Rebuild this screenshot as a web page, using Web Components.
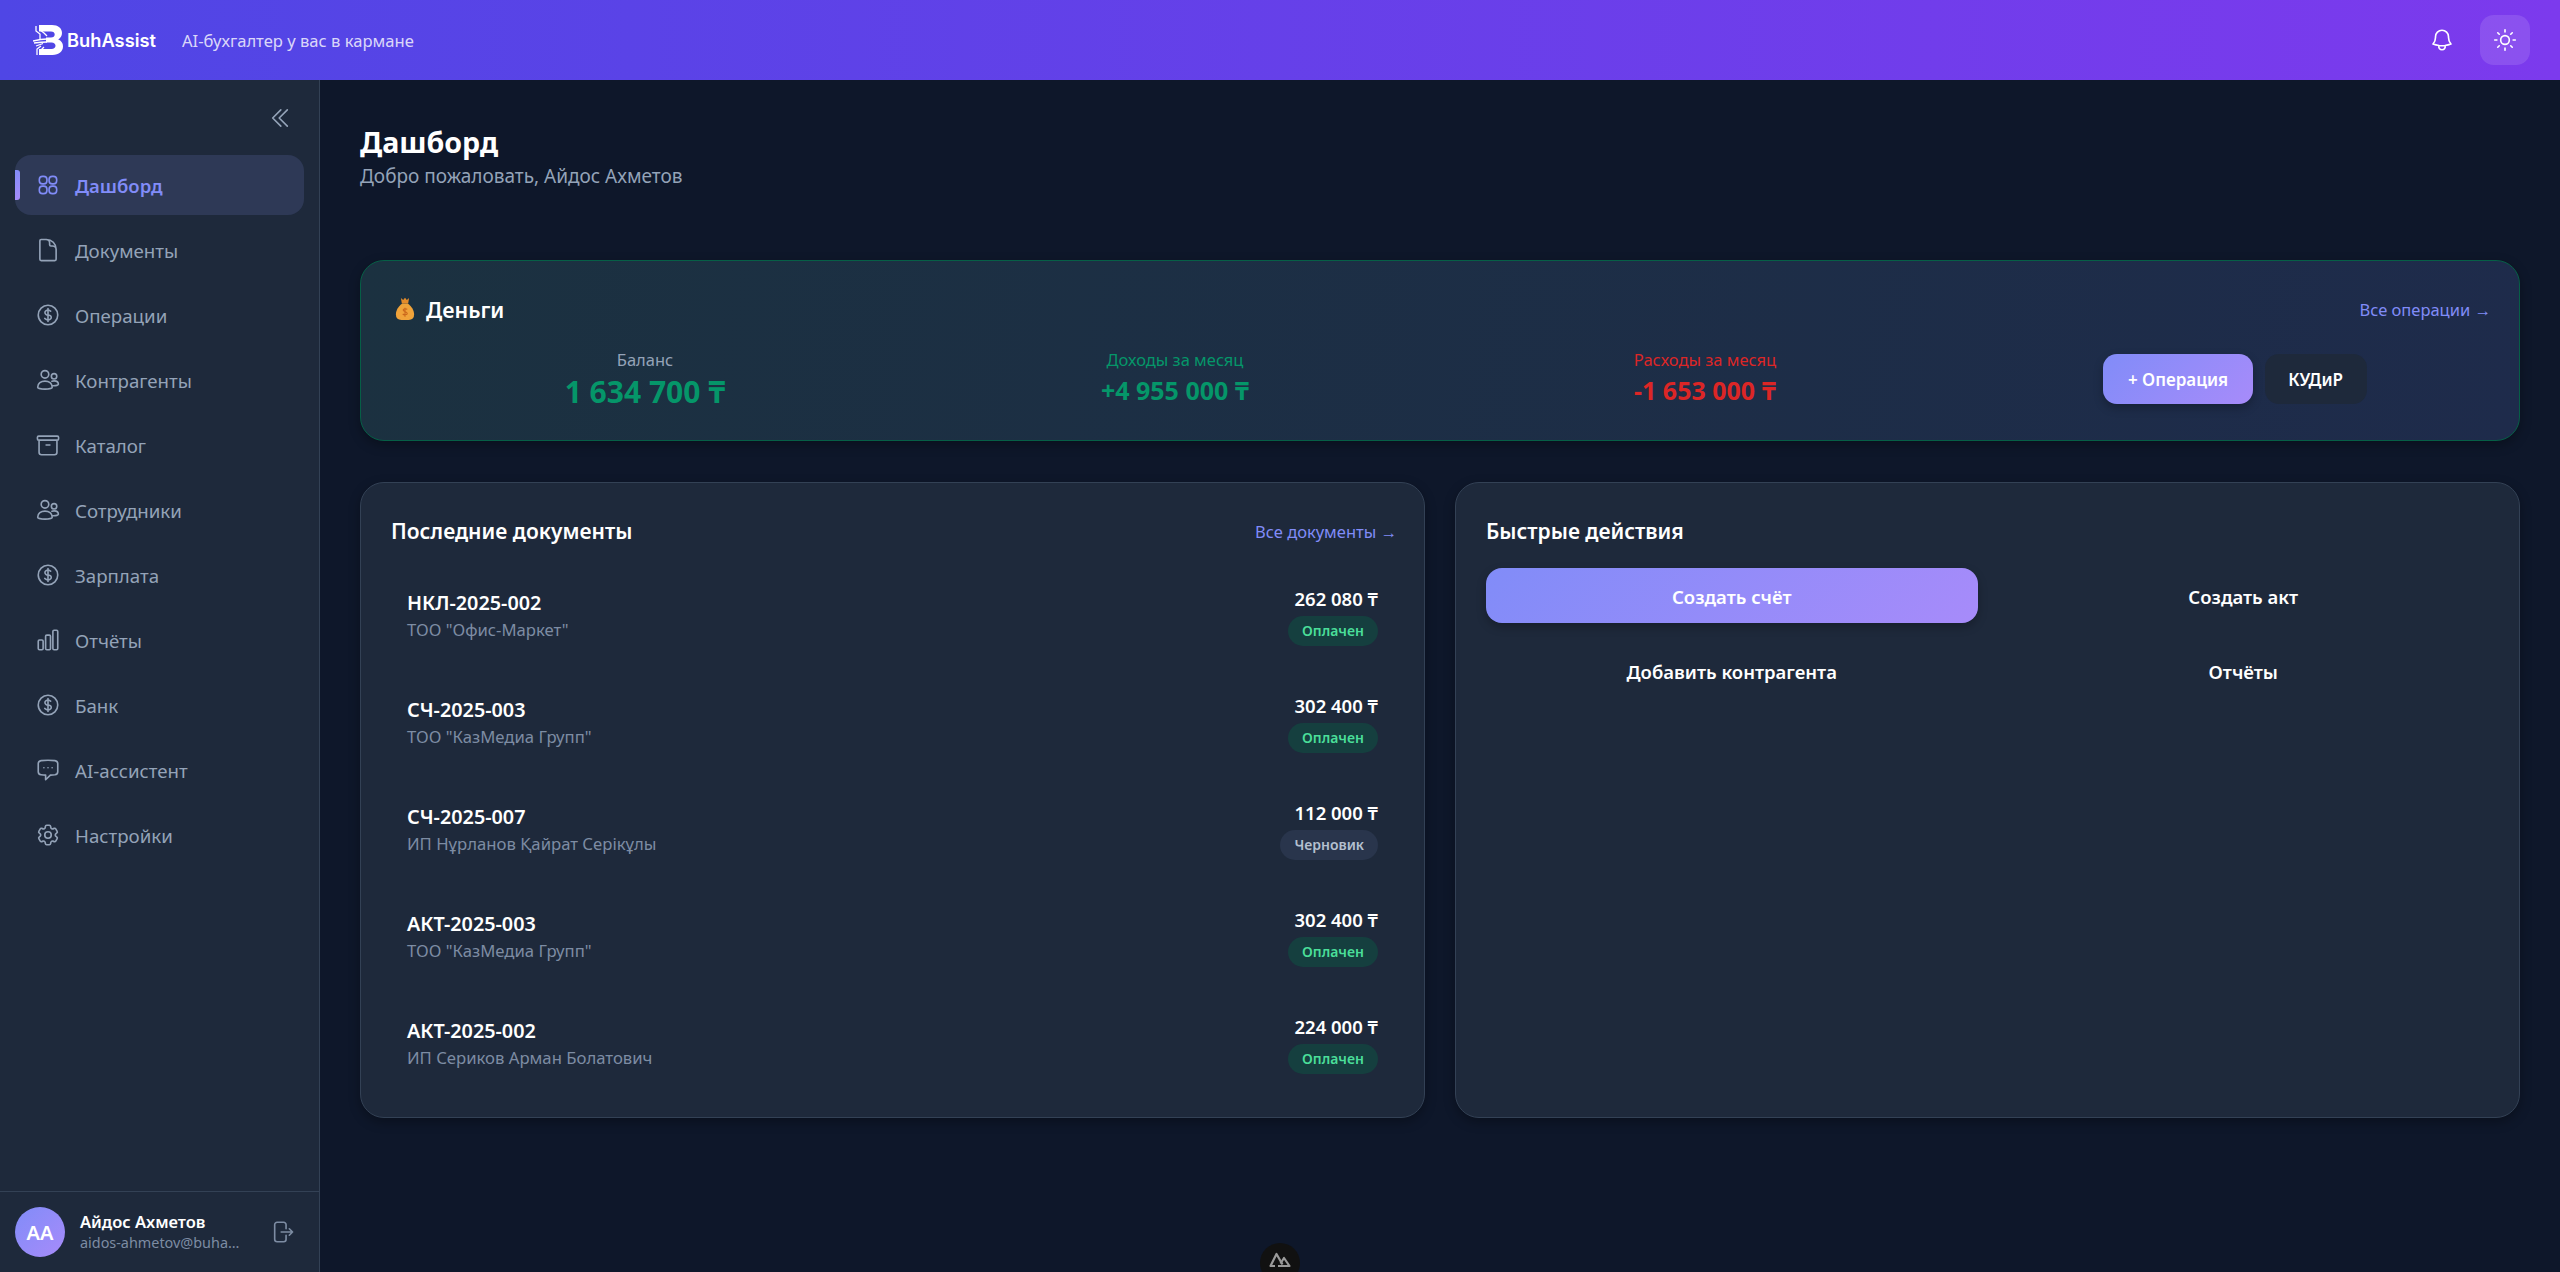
<!DOCTYPE html>
<html lang="ru">
<head>
<meta charset="utf-8">
<title>BuhAssist</title>
<style>
  html, body { margin: 0; height: 100%; background: #0e172a; overflow: hidden; }
  body { font-family: "Noto Sans", "Open Sans", sans-serif; color: #fff; }
</style>
</head>
<body>
<app-shell>
  <app-header slot="top"></app-header>
  <side-bar slot="side">
    <nav-item icon="grid" active>Дашборд</nav-item>
    <nav-item icon="doc">Документы</nav-item>
    <nav-item icon="dollar">Операции</nav-item>
    <nav-item icon="users">Контрагенты</nav-item>
    <nav-item icon="box">Каталог</nav-item>
    <nav-item icon="users">Сотрудники</nav-item>
    <nav-item icon="dollar">Зарплата</nav-item>
    <nav-item icon="chart">Отчёты</nav-item>
    <nav-item icon="dollar">Банк</nav-item>
    <nav-item icon="chat">AI-ассистент</nav-item>
    <nav-item icon="gear">Настройки</nav-item>
    <user-box slot="bottom" name="Айдос Ахметов" mail="aidos-ahmetov@buha…"></user-box>
  </side-bar>
  <page-head title="Дашборд" sub="Добро пожаловать, Айдос Ахметов"></page-head>
  <money-card>
    <stat-block label="Баланс" value="1 634 700 ₸" kind="balance"></stat-block>
    <stat-block label="Доходы за месяц" value="+4 955 000 ₸" kind="in"></stat-block>
    <stat-block label="Расходы за месяц" value="-1 653 000 ₸" kind="out"></stat-block>
  </money-card>
  <two-cols>
    <panel-card title="Последние документы" link="Все документы →">
      <doc-row name="НКЛ-2025-002" who='ТОО "Офис-Маркет"' sum="262 080 ₸" status="Оплачен"></doc-row>
      <doc-row name="СЧ-2025-003" who='ТОО "КазМедиа Групп"' sum="302 400 ₸" status="Оплачен"></doc-row>
      <doc-row name="СЧ-2025-007" who="ИП Нұрланов Қайрат Серікұлы" sum="112 000 ₸" status="Черновик" draft></doc-row>
      <doc-row name="АКТ-2025-003" who='ТОО "КазМедиа Групп"' sum="302 400 ₸" status="Оплачен"></doc-row>
      <doc-row name="АКТ-2025-002" who="ИП Сериков Арман Болатович" sum="224 000 ₸" status="Оплачен"></doc-row>
    </panel-card>
    <panel-card title="Быстрые действия">
      <quick-grid>
        <quick-btn primary>Создать счёт</quick-btn>
        <quick-btn>Создать акт</quick-btn>
        <quick-btn>Добавить контрагента</quick-btn>
        <quick-btn>Отчёты</quick-btn>
      </quick-grid>
    </panel-card>
  </two-cols>
  <nuxt-badge slot="over"></nuxt-badge>
</app-shell>

<script>
// outline icons, 24x24 grid
const ICONS = {
  grid: '<rect x="4" y="4" width="7" height="7" rx="3"/><rect x="13" y="4" width="7" height="7" rx="3"/><rect x="4" y="13" width="7" height="7" rx="3"/><rect x="13" y="13" width="7" height="7" rx="3"/>',
  doc: '<path d="M19.5 14.25v-2.625a3.375 3.375 0 0 0-3.375-3.375h-1.5A1.125 1.125 0 0 1 13.5 7.125v-1.5a3.375 3.375 0 0 0-3.375-3.375H8.25m2.25 0H5.625c-.621 0-1.125.504-1.125 1.125v17.25c0 .621.504 1.125 1.125 1.125h12.75c.621 0 1.125-.504 1.125-1.125V11.25a9 9 0 0 0-9-9Z"/>',
  dollar: '<path d="M12 6v12m-3-2.818.879.659c1.171.879 3.07.879 4.242 0 1.172-.879 1.172-2.303 0-3.182C13.536 12.219 12.768 12 12 12c-.725 0-1.45-.22-2.003-.659-1.106-.879-1.106-2.303 0-3.182s2.9-.879 4.006 0l.415.33M21 12a9 9 0 1 1-18 0 9 9 0 0 1 18 0Z"/>',
  users: '<circle cx="9.2" cy="6.8" r="3.5"/><circle cx="17.6" cy="8.6" r="2.5"/><path d="M2.5 18.6c0-3.4 3-5.6 6.7-5.6 3.7 0 6.7 2.2 6.7 5.6 0 .9-3 1.8-6.7 1.8s-6.7-.9-6.7-1.8Z"/><path d="M15.6 13.2c.7-.3 1.4-.4 2.1-.4 2.2 0 3.9 1.3 3.9 3.2 0 .8-1.9 1.4-5.4 1.3"/>',
  box: '<path d="M20.25 7.5v11.25a2.25 2.25 0 0 1-2.25 2.25H6a2.25 2.25 0 0 1-2.25-2.25V7.5m6.5 4.5h3.5M3.4 7.5h17.2c.62 0 1.15-.5 1.15-1.125v-1.5C21.75 4.254 21.22 3.75 20.6 3.75H3.4c-.62 0-1.15.504-1.15 1.125v1.5C2.25 7 2.78 7.5 3.4 7.5Z"/>',
  chart: '<path d="M3 13.1c0-.62.5-1.1 1.1-1.1h2.3c.6 0 1.1.5 1.1 1.1v6.8c0 .6-.5 1.1-1.1 1.1H4.100c-.6 0-1.1-.5-1.1-1.1v-6.800ZM9.800 8.600c0-.6.5-1.100 1.100-1.100h2.300c.6 0 1.100.5 1.100 1.100v11.300c0 .6-.5 1.100-1.100 1.100h-2.300c-.6 0-1.100-.5-1.100-1.100V8.600ZM16.500 4.100c0-.6.5-1.100 1.100-1.100h2.300c.6 0 1.100.5 1.100 1.100v15.800c0 .6-.5 1.100-1.100 1.100h-2.300c-.6 0-1.100-.5-1.100-1.100V4.100Z"/>',
  chat: '<path d="M3 6.200c0-1.500 1.100-2.700 2.600-2.900 2-.2 4.100-.3 6.400-.3s4.400.1 6.400.3c1.500.2 2.600 1.400 2.600 2.900v7.300c0 1.500-1.100 2.700-2.600 2.900-1.400.1-2.800.2-4.200.3L9.800 21v-4.300c-1.500 0-2.900-.1-4.200-.3C4.100 16.200 3 15 3 13.500V6.200Z"/><path d="M8.200 9.900h.01M12 9.900h.01M15.800 9.900h.01"/>',
  gear: '<path d="M9.594 3.940c.09-.542.56-.940 1.110-.940h2.593c.55 0 1.020.398 1.110.940l.213 1.281c.063.374.313.686.645.870.074.040.147.083.220.127.325.196.720.257 1.075.124l1.217-.456a1.125 1.125 0 0 1 1.370.490l1.296 2.247a1.125 1.125 0 0 1-.260 1.431l-1.003.827c-.293.241-.438.613-.430.992a7.723 7.723 0 0 1 0 .255c-.008.378.137.750.430.991l1.004.827c.424.350.534.955.260 1.430l-1.298 2.247a1.125 1.125 0 0 1-1.369.491l-1.217-.456c-.355-.133-.750-.072-1.076.124a6.470 6.470 0 0 1-.220.128c-.331.183-.581.495-.644.869l-.213 1.281c-.090.543-.560.940-1.110.940h-2.594c-.550 0-1.019-.398-1.110-.940l-.213-1.281c-.062-.374-.312-.686-.644-.870a6.520 6.520 0 0 1-.220-.127c-.325-.196-.720-.257-1.076-.124l-1.217.456a1.125 1.125 0 0 1-1.369-.490l-1.297-2.247a1.125 1.125 0 0 1 .260-1.431l1.004-.827c.292-.240.437-.613.430-.991a6.932 6.932 0 0 1 0-.255c.007-.380-.138-.751-.430-.992l-1.004-.827a1.125 1.125 0 0 1-.260-1.430l1.297-2.247a1.125 1.125 0 0 1 1.370-.491l1.216.456c.356.133.751.072 1.076-.124.072-.044.146-.086.220-.128.332-.183.582-.495.644-.869l.214-1.280Z"/><circle cx="12" cy="12" r="3"/>',
  chevrons: '<path d="m18.750 4.500-7.500 7.500 7.500 7.500m-6-15L5.250 12l7.500 7.500"/>',
  logout: '<path d="M15.750 9V5.250A2.250 2.250 0 0 0 13.500 3h-6a2.250 2.250 0 0 0-2.250 2.250v13.500A2.250 2.250 0 0 0 7.500 21h6a2.250 2.250 0 0 0 2.250-2.250V15m-4.500-3h10.500m0 0-3-3m3 3-3 3"/>',
  bell: '<path d="M14.857 17.082a23.848 23.848 0 0 0 5.454-1.310A8.967 8.967 0 0 1 18 9.750V9A6 6 0 0 0 6 9v.750a8.967 8.967 0 0 1-2.312 6.022c1.733.640 3.560 1.085 5.455 1.310m5.714 0a24.255 24.255 0 0 1-5.714 0m5.714 0a3 3 0 1 1-5.714 0"/>',
  sun: '<path d="M12 2.500v2M12 19.500v2M2.500 12h2M19.500 12h2M5.300 5.300l1.400 1.400M17.300 17.300l1.400 1.400M5.300 18.700l1.400-1.400M17.300 6.700l1.400-1.400"/><circle cx="12" cy="12" r="4"/>'
};

function icon(name, size, sw) {
  return `<svg width="${size}" height="${size}" viewBox="0 0 24 24" fill="none" stroke="currentColor" stroke-width="${sw || 1.5}" stroke-linecap="round" stroke-linejoin="round">${ICONS[name]}</svg>`;
}

class AppShell extends HTMLElement {
  constructor() {
    super();
    this.attachShadow({ mode: 'open' });
    this.shadowRoot.innerHTML = `
      <style>
        :host { display: flex; flex-direction: column; height: 100vh; position: relative; overflow: hidden; }
        .body { flex: 1; display: flex; min-height: 0; }
        main { flex: 1; min-width: 0; padding: 40px 40px 0; background: #0e172a; box-sizing: border-box; }
      </style>
      <slot name="top"></slot>
      <div class="body">
        <slot name="side"></slot>
        <main><slot></slot></main>
      </div>
      <slot name="over"></slot>
    `;
  }
}
customElements.define('app-shell', AppShell);

class AppHeader extends HTMLElement {
  constructor() {
    super();
    this.attachShadow({ mode: 'open' });
    this.shadowRoot.innerHTML = `
      <style>
        :host { display: flex; align-items: center; height: 80px; flex: none; padding: 0 30px 0 33px; box-sizing: border-box;
          background: linear-gradient(90deg, #4f46e5, #7c3aed); }
        .logo { display: block; margin-right: 4px; }
        .brand { font: 600 18.3px Inter, sans-serif; color: #fff; }
        .tag { margin-left: 26px; font-size: 16.6px; color: rgba(255,255,255,.8); }
        .right { margin-left: auto; display: flex; align-items: center; gap: 13px; }
        .bell { display: flex; width: 50px; justify-content: center; color: #fff; }
        .theme { width: 50px; height: 50px; border-radius: 14px; background: rgba(255,255,255,.12);
          display: flex; align-items: center; justify-content: center; color: #fff; }
      </style>
      <svg class="logo" width="30" height="32" viewBox="0 0 30 32">
        <path fill="#fff" d="M6 1h13c6 0 10 3.200 10 8 0 3-1.400 5.200-3.800 6.400C28.300 16.600 30 19 30 22.300 30 27.600 26 31 19.500 31H6v-6h12.500c2.500 0 4-1.200 4-3.200s-1.500-3.300-4-3.300H13v-5h5c2.300 0 3.700-1.100 3.700-3s-1.400-3-3.700-3H6V1Z"/>
        <g fill="none" stroke="#fff" stroke-width="1.300">
          <path d="M3 2v5l4 3v5M7 2v4l4 3 3 3M0 17c4-1 9-2 14-2M1 19c4-.5 8-1 13-1M3 22l7-2.500M4 31v-6l4-3M8 31v-5l3-3"/>
        </g>
      </svg>
      <span class="brand">BuhAssist</span>
      <span class="tag">AI-бухгалтер у вас в кармане</span>
      <div class="right">
        <span class="bell">${icon('bell', 26)}</span>
        <span class="theme">${icon('sun', 26)}</span>
      </div>
    `;
  }
}
customElements.define('app-header', AppHeader);

class SideBar extends HTMLElement {
  constructor() {
    super();
    this.attachShadow({ mode: 'open' });
    this.shadowRoot.innerHTML = `
      <style>
        :host { display: flex; flex-direction: column; width: 320px; flex: none; box-sizing: border-box;
          background: #1e293b; border-right: 1px solid #334155; }
        .toggle { display: flex; justify-content: flex-end; padding: 25px 26px 0 0; height: 50px; color: #94a3b8; box-sizing: content-box; }
        nav { flex: 1; display: flex; flex-direction: column; gap: 5px; padding: 0 15px; }
      </style>
      <div class="toggle">${icon('chevrons', 26)}</div>
      <nav><slot></slot></nav>
      <slot name="bottom"></slot>
    `;
  }
}
customElements.define('side-bar', SideBar);

class NavItem extends HTMLElement {
  constructor() {
    super();
    this.attachShadow({ mode: 'open' });
    this.shadowRoot.innerHTML = `
      <style>
        :host { display: flex; align-items: center; gap: 14px; height: 60px; padding-left: 20px; box-sizing: border-box;
          border-radius: 16px; position: relative; font-size: 18.7px; color: #94a3b8; }
        :host([active]) { background: #2e3956; color: #818cf8; font-weight: 600; font-size: 18.5px; }
        :host([active])::before { content: ""; position: absolute; left: 0; top: 15px; width: 5px; height: 30px;
          border-radius: 0 3px 3px 0; background: linear-gradient(135deg, #818cf8, #a78bfa); }
        svg { flex: none; }
        span { padding-top: 1px; }
      </style>
      ${icon(this.getAttribute('icon'), 26)}
      <span><slot></slot></span>
    `;
  }
}
customElements.define('nav-item', NavItem);

class UserBox extends HTMLElement {
  constructor() {
    super();
    this.attachShadow({ mode: 'open' });
    this.shadowRoot.innerHTML = `
      <style>
        :host { display: flex; align-items: center; height: 81px; box-sizing: border-box; padding: 0 15px; gap: 15px;
          border-top: 1px solid #334155; }
        .ava { width: 50px; height: 50px; flex: none; border-radius: 50%; background: linear-gradient(135deg, #818cf8, #a78bfa);
          display: flex; align-items: center; justify-content: center; font-size: 20px; font-weight: 600; color: #fff; }
        .txt { width: 160px; min-width: 0; }
        .name { font-size: 16.5px; font-weight: 600; color: #fff; line-height: 22px; }
        .mail { font-size: 14.4px; color: #7d8ca3; line-height: 20px; white-space: nowrap; }
        .out { color: #7d8ca3; display: flex; margin-left: 14px; }
      </style>
      <div class="ava">АА</div>
      <div class="txt">
        <div class="name">${this.getAttribute('name')}</div>
        <div class="mail">${this.getAttribute('mail')}</div>
      </div>
      <span class="out">${icon('logout', 26)}</span>
    `;
  }
}
customElements.define('user-box', UserBox);

class PageHead extends HTMLElement {
  constructor() {
    super();
    this.attachShadow({ mode: 'open' });
    this.shadowRoot.innerHTML = `
      <style>
        :host { display: block; height: 140px; }
        h1 { margin: 0; font-size: 28.6px; line-height: 43px; font-weight: 700; color: #fff; }
        p { margin: 0; font-size: 19px; line-height: 26px; color: #94a3b8; }
      </style>
      <h1>${this.getAttribute('title')}</h1>
      <p>${this.getAttribute('sub')}</p>
    `;
  }
}
customElements.define('page-head', PageHead);

class MoneyCard extends HTMLElement {
  constructor() {
    super();
    this.attachShadow({ mode: 'open' });
    this.shadowRoot.innerHTML = `
      <style>
        :host { display: block; box-sizing: border-box; height: 181px; padding: 32px 31px; margin-bottom: 41px;
          border: 1px solid #065f46; border-radius: 24px;
          background: linear-gradient(100deg, #1b3140, #1e2b4b);
          box-shadow: 0 4px 12px rgba(0,0,0,.3); }
        .top { display: flex; justify-content: space-between; align-items: center; height: 32px; margin-bottom: 25px; }
        h3 { margin: 0; font-size: 21.4px; font-weight: 600; color: #fff; display: flex; align-items: center; gap: 11px; padding-left: 3px; }
        a { font-size: 16.5px; color: #818cf8; margin-right: -3px; }
        .grid { display: grid; grid-template-columns: repeat(4, 1fr); gap: 24px; align-items: start; }
        .act { display: flex; justify-content: center; gap: 12px; margin-top: 4px; }
        .btn { height: 50px; box-sizing: border-box; display: flex; align-items: center; border-radius: 14px; font-size: 17px; font-weight: 600; color: #fff; }
        .p { padding: 0 24.500px; background: linear-gradient(135deg, #818cf8, #a78bfa); box-shadow: 0 4px 10px rgba(0,0,0,.25); }
        .s { background: #1e293b; padding: 0 23.500px; }
      </style>
      <div class="top">
        <h3>
          <svg width="20" height="24" viewBox="0 0 22 26">
            <path fill="#f0a33a" d="M8 7h6c4 3 7 7 7 12 0 4-2 6-6 6H7c-4 0-6-2-6-6 0-5 3-9 7-12Z"/>
            <path fill="none" stroke="#c9661c" stroke-width="1.200" d="M11 11.500v10M13.500 13.500c-1-1-4-1-4.500.5-.5 2 4.500 1.500 4.500 4 0 1.500-3.500 2-5 .5"/>
            <path fill="#e58c2a" d="M6.500 1 9 3l2-2.500L13 3l2.500-2-1 6h-7Z"/>
          </svg>
          <span>Деньги</span>
        </h3>
        <a>Все операции →</a>
      </div>
      <div class="grid">
        <slot></slot>
        <div class="act">
          <div class="btn p">+ Операция</div>
          <div class="btn s">КУДиР</div>
        </div>
      </div>
    `;
  }
}
customElements.define('money-card', MoneyCard);

class StatBlock extends HTMLElement {
  constructor() {
    super();
    this.attachShadow({ mode: 'open' });
    const colors = { balance: '#94a3b8', in: '#059669', out: '#dc2626' };
    const kind = this.getAttribute('kind');
    const big = kind === 'balance';
    this.shadowRoot.innerHTML = `
      <style>
        :host { display: block; text-align: center; }
        .l { font-size: 16.5px; line-height: 20px; color: ${colors[kind]}; }
        .v { font-size: ${big ? 30 : 25}px; line-height: ${big ? 44 : 40}px; font-weight: 700; color: ${big ? '#059669' : colors[kind]}; white-space: nowrap; }
      </style>
      <div class="l">${this.getAttribute('label')}</div>
      <div class="v">${this.getAttribute('value')}</div>
    `;
  }
}
customElements.define('stat-block', StatBlock);

class TwoCols extends HTMLElement {
  constructor() {
    super();
    this.attachShadow({ mode: 'open' });
    this.shadowRoot.innerHTML = `
      <style>:host { display: grid; grid-template-columns: 1fr 1fr; gap: 30px; }</style>
      <slot></slot>
    `;
  }
}
customElements.define('two-cols', TwoCols);

class PanelCard extends HTMLElement {
  constructor() {
    super();
    this.attachShadow({ mode: 'open' });
    const link = this.getAttribute('link');
    this.shadowRoot.innerHTML = `
      <style>
        :host { display: block; box-sizing: border-box; padding: 30px 30px 29px; border: 1px solid #334155; border-radius: 24px;
          background: #1e293b; box-shadow: 0 4px 12px rgba(0,0,0,.3); }
        .top { display: flex; justify-content: space-between; align-items: center; height: 36px; margin-bottom: 20px; }
        h3 { margin: 0; font-size: 21px; font-weight: 600; color: #fff; }
        a { font-size: 16.5px; color: #818cf8; margin-right: -3px; }
        .list { display: flex; flex-direction: column; gap: 16px; }
      </style>
      <div class="top"><h3>${this.getAttribute('title')}</h3>${link ? `<a>${link}</a>` : ''}</div>
      <div class="list"><slot></slot></div>
    `;
  }
}
customElements.define('panel-card', PanelCard);

class DocRow extends HTMLElement {
  constructor() {
    super();
    this.attachShadow({ mode: 'open' });
    const draft = this.hasAttribute('draft');
    this.shadowRoot.innerHTML = `
      <style>
        :host { display: flex; justify-content: space-between; align-items: center; height: 91px; padding: 0 16px; box-sizing: border-box; }
        .l { padding-top: 2px; }
        .n { font-size: 19.8px; line-height: 26px; font-weight: 600; color: #fff; }
        .w { font-size: 16.7px; line-height: 24px; margin-top: 2px; color: #7d8ca3; }
        .r { display: flex; flex-direction: column; align-items: flex-end; gap: 5px; padding-top: 3px; }
        .s { font-size: 18.5px; line-height: 24px; font-weight: 600; color: #fff; }
        .b { height: 30px; display: flex; align-items: center; padding: 0 14px; border-radius: 15px; font-size: 14px; font-weight: 600;
          color: ${draft ? '#b4c0d0' : '#4ade99'}; background: ${draft ? '#29354c' : '#153f3f'}; }
      </style>
      <div class="l">
        <div class="n">${this.getAttribute('name')}</div>
        <div class="w">${this.getAttribute('who')}</div>
      </div>
      <div class="r">
        <div class="s">${this.getAttribute('sum')}</div>
        <div class="b">${this.getAttribute('status')}</div>
      </div>
    `;
  }
}
customElements.define('doc-row', DocRow);

class QuickGrid extends HTMLElement {
  constructor() {
    super();
    this.attachShadow({ mode: 'open' });
    this.shadowRoot.innerHTML = `
      <style>:host { display: grid; grid-template-columns: 1fr 1fr; gap: 20px; margin-top: -1px; }</style>
      <slot></slot>
    `;
  }
}
customElements.define('quick-grid', QuickGrid);

class QuickBtn extends HTMLElement {
  constructor() {
    super();
    this.attachShadow({ mode: 'open' });
    this.shadowRoot.innerHTML = `
      <style>
        :host { display: flex; align-items: center; justify-content: center; height: 55px; padding-top: 2px; box-sizing: border-box; border-radius: 16px;
          font-size: 18.5px; font-weight: 600; color: #fff; }
        :host([primary]) { background: linear-gradient(135deg, #818cf8, #a78bfa); box-shadow: 0 4px 10px rgba(0,0,0,.25); }
      </style>
      <slot></slot>
    `;
  }
}
customElements.define('quick-btn', QuickBtn);

class NuxtBadge extends HTMLElement {
  constructor() {
    super();
    this.attachShadow({ mode: 'open' });
    this.shadowRoot.innerHTML = `
      <style>
        :host { position: absolute; left: 1260px; top: 1243px; width: 40px; height: 40px; border-radius: 50%;
          background: #111; display: flex; align-items: flex-start; justify-content: center; padding-top: 9px; box-sizing: border-box; }
      </style>
      <svg width="22" height="16" viewBox="0 0 22 16" fill="none" stroke="#9a9a9a" stroke-width="2.200" stroke-linejoin="round">
        <path d="M6 14H1.500L7.500 2l6 10.500"/>
        <path d="M9 14h11.500L15 6l-3.500 5.500"/>
      </svg>
    `;
  }
}
customElements.define('nuxt-badge', NuxtBadge);
</script>
</body>
</html>
